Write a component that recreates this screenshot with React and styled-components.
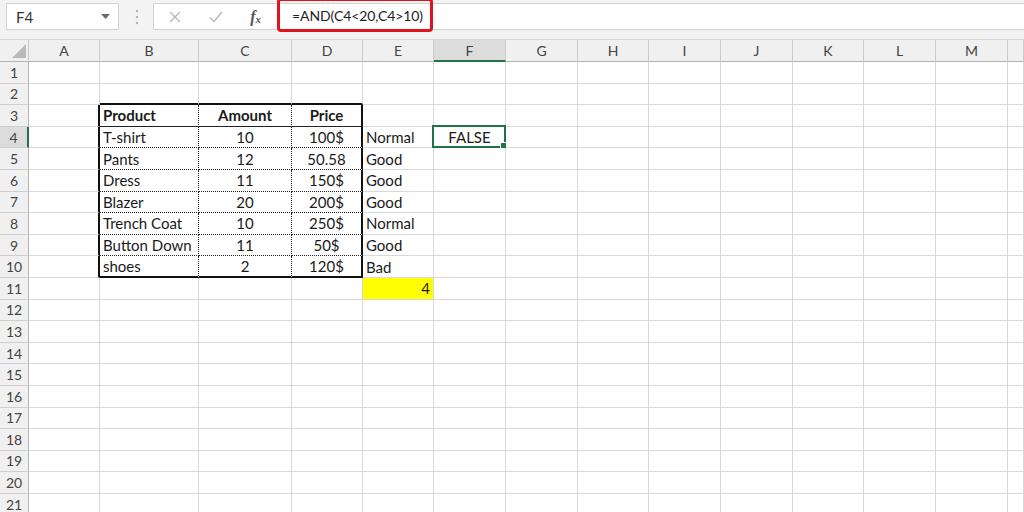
import React from 'react';
import styled, { createGlobalStyle } from 'styled-components';

const GlobalStyle = createGlobalStyle`
  html, body { margin: 0; padding: 0; background: #fff; }
  body {
    width: 1024px;
    height: 512px;
    overflow: hidden;
    font-family: Lato, "Open Sans", sans-serif;
  }
`;

// last column is only partly on screen, its letter falls outside the window
const COLS = [
  { key: 'A', w: 71 },
  { key: 'B', w: 99 },
  { key: 'C', w: 93 },
  { key: 'D', w: 71 },
  { key: 'E', w: 71 },
  { key: 'F', w: 72 },
  { key: 'G', w: 72 },
  { key: 'H', w: 71 },
  { key: 'I', w: 72 },
  { key: 'J', w: 72 },
  { key: 'K', w: 71 },
  { key: 'L', w: 72 },
  { key: 'M', w: 72 },
  { key: 'N', w: 16, label: '' },
];
const ROWS = Array.from({ length: 21 }, (_, i) => i + 1);

const items = [
  ['T-shirt', '10', '100$', 'Normal'],
  ['Pants', '12', '50.58', 'Good'],
  ['Dress', '11', '150$', 'Good'],
  ['Blazer', '20', '200$', 'Good'],
  ['Trench Coat', '10', '250$', 'Normal'],
  ['Button Down', '11', '50$', 'Good'],
  ['shoes', '2', '120$', 'Bad'],
];

const cells = {
  B3: { v: 'Product', bold: true },
  C3: { v: 'Amount', bold: true, align: 'center' },
  D3: { v: 'Price', bold: true, align: 'center' },
  E11: { v: '4', align: 'right', bg: '#ffff00' },
  F4: { v: 'FALSE', align: 'center' },
};
items.forEach(([p, a, pr, s], i) => {
  const r = i + 4;
  cells['B' + r] = { v: p };
  cells['C' + r] = { v: a, align: 'center' };
  cells['D' + r] = { v: pr, align: 'center' };
  cells['E' + r] = { v: s };
});

const GRID = '1px solid #d9d9d9';
const THICK = '2px solid #111';
const DOTTED = '1px dotted #222';

const bordersFor = (col, row) => {
  const tableCol = ['B', 'C', 'D'].includes(col);
  let right = GRID;
  let bottom = GRID;
  if (col === 'A' && row >= 3 && row <= 10) right = THICK;
  if (row === 2 && tableCol) bottom = THICK;
  if (tableCol && row >= 3 && row <= 10) {
    right = col === 'D' ? THICK : DOTTED;
    if (row === 10) bottom = THICK;
    else if (row === 3) bottom = '1px solid #222';
    else bottom = DOTTED;
  }
  return { right, bottom };
};

export default function App() {
  return (
    <>
      <GlobalStyle />
      <Page>
        <Toolbar>
          <NameBox>
            <span>F4</span>
            <DropArrow width="9" height="6" viewBox="0 0 9 6">
              <path d="M0 0 L9 0 L4.5 5 Z" fill="#6a6a6a" />
            </DropArrow>
          </NameBox>
          <Grip width="4" height="16" viewBox="0 0 4 16">
            <circle cx="2" cy="2" r="1.2" fill="#b5b5b5" />
            <circle cx="2" cy="8" r="1.2" fill="#b5b5b5" />
            <circle cx="2" cy="14" r="1.2" fill="#b5b5b5" />
          </Grip>
          <FuncButtons>
            <svg width="12" height="12" viewBox="0 0 12 12">
              <path d="M1 1 L11 11 M11 1 L1 11" stroke="#b8b8b8" strokeWidth="1.4" />
            </svg>
            <svg width="14" height="12" viewBox="0 0 14 12">
              <path d="M1 6.5 L5 10.5 L13 1" stroke="#b8b8b8" strokeWidth="1.4" fill="none" />
            </svg>
            <Fx>
              f<sub>x</sub>
            </Fx>
          </FuncButtons>
          <FormulaInput>
            <Highlight>=AND(C4&lt;20,C4&gt;10)</Highlight>
          </FormulaInput>
        </Toolbar>
        <Sheet>
          <Corner>
            <svg width="14" height="14" viewBox="0 0 14 14">
              <path d="M14 0 L14 14 L0 14 Z" fill="#b9b9b9" />
            </svg>
          </Corner>
          {COLS.map((c) => (
            <ColHead key={c.key} $active={c.key === 'F'}>
              {c.label ?? c.key}
            </ColHead>
          ))}
          {ROWS.map((r) => (
            <React.Fragment key={r}>
              <RowHead $active={r === 4}>{r}</RowHead>
              {COLS.map((c) => {
                const id = c.key + r;
                const cell = cells[id];
                const b = bordersFor(c.key, r);
                return (
                  <Cell
                    key={id}
                    $right={b.right}
                    $bottom={b.bottom}
                    $align={cell?.align}
                    $bold={cell?.bold}
                    $bg={cell?.bg}
                  >
                    {cell?.v}
                    {id === 'F4' && (
                      <Selection>
                        <Handle />
                      </Selection>
                    )}
                  </Cell>
                );
              })}
            </React.Fragment>
          ))}
        </Sheet>
      </Page>
    </>
  );
}

const Page = styled.div`
  width: 1024px;
  height: 512px;
  overflow: hidden;
  display: flex;
  flex-direction: column;
`;

const Toolbar = styled.div`
  flex-shrink: 0;
  height: 40px;
  box-sizing: border-box;
  background: #f3f3f3;
  border-bottom: 1px solid #d6d6d6;
  display: flex;
  align-items: flex-start;
  padding: 3px 0 0 6px;
`;

const NameBox = styled.div`
  width: 113px;
  height: 27px;
  box-sizing: border-box;
  background: #fff;
  border: 1px solid #d2d2d2;
  display: flex;
  align-items: center;
  justify-content: space-between;
  padding: 0 8px 0 9px;
  font-size: 15px;
  color: #333;
`;

const DropArrow = styled.svg`
  margin-top: 1px;
`;

const Grip = styled.svg`
  margin: 6px 14px 0 16px;
`;

const FuncButtons = styled.div`
  width: 125px;
  height: 27px;
  box-sizing: border-box;
  background: #fff;
  border: 1px solid #d2d2d2;
  display: flex;
  align-items: center;
  padding: 0 16px 0 15px;
  justify-content: space-between;
`;

const Fx = styled.span`
  font-family: "Liberation Serif", serif;
  font-style: italic;
  font-weight: bold;
  font-size: 16px;
  color: #555;
  sub {
    font-size: 11px;
    vertical-align: -1px;
  }
`;

const FormulaInput = styled.div`
  flex: 1;
  height: 27px;
  box-sizing: border-box;
  margin-left: -1px;
  background: #fff;
  border: 1px solid #d2d2d2;
  border-right: none;
  display: flex;
  align-items: center;
`;

const Highlight = styled.div`
  width: 156px;
  height: 34px;
  box-sizing: border-box;
  margin-left: -1px;
  margin-top: -3px;
  border: 3px solid #e0141e;
  border-radius: 4px;
  display: flex;
  align-items: center;
  padding-left: 12px;
  font-size: 14px;
  letter-spacing: -0.1px;
  color: #222;
  white-space: nowrap;
`;

const Sheet = styled.div`
  flex-shrink: 0;
  display: grid;
  grid-template-columns: 29px ${COLS.map((c) => c.w + 'px').join(' ')};
  grid-template-rows: 22px repeat(21, 21.6px);
  font-size: 15px;
  color: #1a1a1a;
`;

const Corner = styled.div`
  background: #f0f0f0;
  border-right: 1px solid #c8c8c8;
  border-bottom: 1px solid #b5b5b5;
  display: flex;
  align-items: flex-end;
  justify-content: flex-end;
  padding: 0 2px 3px 0;
`;

const ColHead = styled.div`
  background: ${(p) => (p.$active ? '#dcdcdc' : '#f0f0f0')};
  border-right: 1px solid #cbcbcb;
  border-bottom: ${(p) => (p.$active ? '2px solid #217346' : '1px solid #b5b5b5')};
  display: flex;
  align-items: center;
  justify-content: center;
  font-size: 14px;
  color: #444;
`;

const RowHead = styled.div`
  background: ${(p) => (p.$active ? '#dcdcdc' : '#f0f0f0')};
  border-right: ${(p) => (p.$active ? '2px solid #217346' : '1px solid #b5b5b5')};
  border-bottom: 1px solid #cfcfcf;
  display: flex;
  align-items: center;
  justify-content: center;
  font-size: 14px;
  color: #444;
`;

const Cell = styled.div`
  position: relative;
  border-right: ${(p) => p.$right};
  border-bottom: ${(p) => p.$bottom};
  background: ${(p) => p.$bg || '#fff'};
  display: flex;
  align-items: center;
  justify-content: ${(p) =>
    p.$align === 'center' ? 'center' : p.$align === 'right' ? 'flex-end' : 'flex-start'};
  padding: 0 3px;
  font-weight: ${(p) => (p.$bold ? 700 : 400)};
  white-space: nowrap;
  overflow: visible;
  min-width: 0;
`;

const Selection = styled.div`
  position: absolute;
  left: -2px;
  top: -2px;
  right: -1px;
  bottom: -1px;
  border: 2px solid #217346;
  pointer-events: none;
`;

const Handle = styled.div`
  position: absolute;
  right: -4px;
  bottom: -4px;
  width: 6px;
  height: 6px;
  background: #217346;
  border: 1px solid #fff;
`;
